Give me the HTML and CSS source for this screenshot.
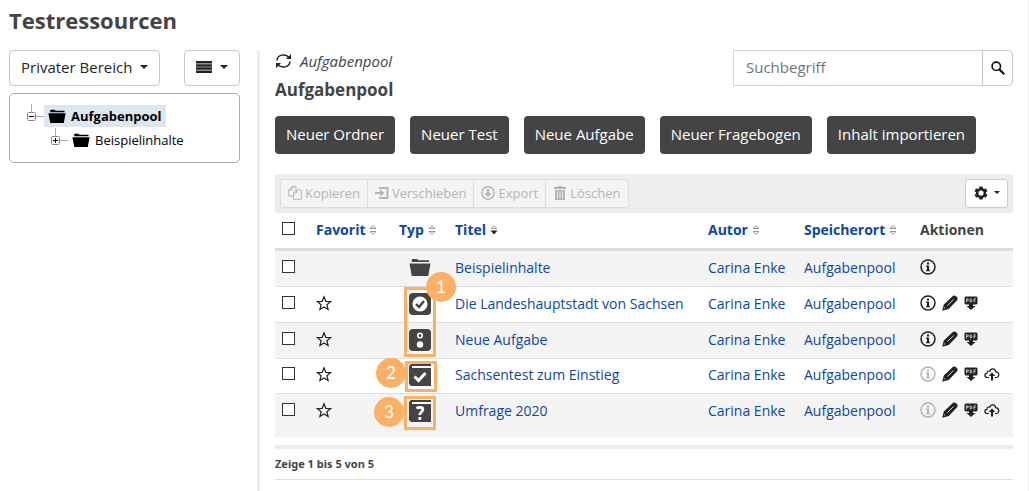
FILE: index.html
```html
<!DOCTYPE html>
<html lang="de">
<head>
<meta charset="utf-8">
<title>Testressourcen</title>
<link rel="stylesheet" href="styles.css">
</head>
<body>
<svg class="sprite" aria-hidden="true">
  <symbol id="folder" viewBox="0 0 24 20" preserveAspectRatio="none"><path d="M3 4V1h6l1 1.500h12v2H3zM.5 6h23L21 20H3z"/></symbol>
  <symbol id="sort" viewBox="0 0 8 10"><path d="M1 3.500 4 .8l3 2.700zM1 6.500l3 2.700 3-2.700z" fill="#fff" stroke="#888" stroke-width=".9"/></symbol>
  <symbol id="sort-down" viewBox="0 0 8 10"><path d="M1 3.500 4 .8l3 2.700z" fill="#fff" stroke="#999" stroke-width=".9"/><path d="M.5 5.500h7L4 9.500z" fill="#222"/></symbol>
  <symbol id="star" viewBox="0 0 16 16"><path d="m8 1.800 1.800 4.500 4.800.3-3.700 3.100 1.200 4.800L8 11.900l-4.100 2.600 1.200-4.800-3.700-3.100 4.800-.3z" fill="none" stroke="currentColor" stroke-width="1.200"/></symbol>
  <symbol id="info" viewBox="0 0 16 16"><circle cx="8" cy="8" r="7" fill="none" stroke="currentColor" stroke-width="1.500"/><path d="M7 3.500h2v2H7zM6 6.500h3V11h1v1.200H6V11h1V7.700H6z"/></symbol>
  <symbol id="pencil" viewBox="0 0 16 16"><path d="M10.300 1.500c1.700-2.500 6.700.8 5 3.500L6.800 14 .2 15.800 1.800 9.500z"/><path d="m5.500 10.500 6-6" stroke="#fff" stroke-width=".8"/><path d="m2.800 13.700-1-.4.500-1.500z" fill="#fff"/></symbol>
  <symbol id="pdf" viewBox="0 0 14 14"><path d="M1.500.500h11l1 1v6l-1 1H9v1.500h2.500L7 14l-4.500-4H5V8.500H1.500l-1-1v-6z"/><path d="M2.500 6.500V2.800h1.700v1.700H3M6.200 2.800v3.200h.8l.8-1v-1.300l-.8-.9zM10 6.500V2.800h2M10 4.600h1.500" fill="none" stroke="#ddd" stroke-width=".8"/></symbol>
  <symbol id="cloud" viewBox="0 0 16 14"><path d="M5 10.500H3.500C0 10.500.1 6.500 3 6.300c-.2-2 1.400-2.700 2.700-2C6.500.8 11.500 1 11.600 4.700c4 .2 4.200 5.500.9 5.800H11" fill="none" stroke="currentColor" stroke-width="1.200"/><path d="m8 5.500 3.300 3.500H9v4.500H7V9H4.700z"/></symbol>
  <symbol id="copy" viewBox="0 0 14 14"><path d="M5 10H.7V4L4 .7h4V4M4 .7V4H.7M5.500 13.300V6.500L8.500 4h4.800v9.300zM8.500 4v3h-3" fill="none" stroke="currentColor"/></symbol>
  <symbol id="move" viewBox="0 0 14 14"><path d="M4 1h9.500v12H4v-2h7.500V3H4z"/><path d="M0 6h5V3.500L9.500 7 5 10.500V8H0z"/></symbol>
  <symbol id="export" viewBox="0 0 14 14"><circle cx="7" cy="7" r="6.200" fill="none" stroke="currentColor" stroke-width="1.400"/><path d="M6 3h2v4h2.500L7 11 3.500 7H6z"/></symbol>
  <symbol id="trash" viewBox="0 0 12 14"><path d="M4 0h4v1h4v2H0V1h4zM1 4h10v10H1z"/><path d="M3.500 5.500v7M6 5.500v7m2.500-7v7" stroke="#f4f4f4" stroke-width=".8"/></symbol>
</svg>
<div class="page">
  <h1>Testressourcen</h1>
  <div class="layout">
    <aside class="side">
      <div class="side-tools">
        <button class="btn" type="button">Privater Bereich <i class="caret"></i></button>
        <button class="btn" type="button" aria-label="Ansicht"><svg class="bars" viewBox="0 0 16 12"><path fill="#8a8e91" d="M0 0h16v12H0z"/><path d="M0 1h16M0 4.500h16M0 7.500h16M0 11h16" stroke="#212529" stroke-width="2"/></svg><i class="caret"></i></button>
      </div>
      <nav class="tree" aria-label="Ordner">
        <div class="node"><svg class="joint" viewBox="0 0 17 24"><path d="M4.500 0v10M9 12.500h8" stroke="#aaa"/><rect x=".5" y="8.500" width="8" height="8" rx="1" fill="#fff" stroke="#888"/><path d="M2 12.500h5" stroke="#000"/></svg><a class="leaf active" href="#"><svg class="folder"><use href="#folder"/></svg>Aufgabenpool</a></div>
        <div class="node child"><svg class="joint" viewBox="0 0 17 24"><path d="M4.500 0v9M9 12.500h8" stroke="#aaa"/><rect x=".5" y="8.500" width="8" height="8" rx="1" fill="#fff" stroke="#888"/><path d="M2 12.500h5M4.500 10v5" stroke="#000"/></svg><a class="leaf" href="#"><svg class="folder"><use href="#folder"/></svg>Beispielinhalte</a></div>
      </nav>
    </aside>
    <main class="main">
      <header class="head">
        <div>
          <div class="crumb"><svg class="refresh" viewBox="0 0 16 16"><path d="M1.500 7.500C2 1.500 10 .2 13.500 4.500M14.500 8.500C14 14.500 6 15.800 2.500 11.500" fill="none" stroke="#222" stroke-width="1.500"/><path d="M15.500 1v5h-5zM.5 15v-5h5z"/></svg><em>Aufgabenpool</em></div>
          <h2>Aufgabenpool</h2>
        </div>
        <form class="search">
          <input type="text" placeholder="Suchbegriff" aria-label="Suchbegriff">
          <button type="button" aria-label="Suchen"><svg viewBox="0 0 14 14"><circle cx="5.300" cy="5.300" r="4.200" fill="none" stroke="#111" stroke-width="1.600"/><path d="m8.200 8.200 5 5" stroke="#111" stroke-width="2.200"/></svg></button>
        </form>
      </header>
      <div class="actions">
        <button type="button">Neuer Ordner</button>
        <button type="button">Neuer Test</button>
        <button type="button">Neue Aufgabe</button>
        <button type="button">Neuer Fragebogen</button>
        <button type="button">Inhalt importieren</button>
      </div>
      <div class="toolbar">
        <div class="group">
          <button type="button" disabled><svg><use href="#copy"/></svg>Kopieren</button>
          <button type="button" disabled><svg><use href="#move"/></svg>Verschieben</button>
          <button type="button" disabled><svg><use href="#export"/></svg>Export</button>
          <button type="button" disabled><svg><use href="#trash"/></svg>Löschen</button>
        </div>
        <button class="settings" type="button" aria-label="Einstellungen"><svg viewBox="0 0 14 14"><path d="M7 .5v13M1.300 3.800l11.400 6.400M1.300 10.200l11.400-6.400" stroke="#222" stroke-width="3.400"/><circle cx="7" cy="7" r="3.900" fill="#fff" stroke="#222" stroke-width="2.600"/></svg><i class="caret small"></i></button>
      </div>
      <div class="table-wrap">
        <table>
          <colgroup><col class="c-check"><col class="c-fav"><col class="c-type"><col><col class="c-author"><col class="c-place"><col class="c-act"></colgroup>
          <thead>
            <tr>
              <th><input type="checkbox" aria-label="Alle auswählen"></th>
              <th><a href="#">Favorit<svg class="sort"><use href="#sort"/></svg></a></th>
              <th><a href="#">Typ<svg class="sort"><use href="#sort"/></svg></a></th>
              <th><a href="#">Titel<svg class="sort"><use href="#sort-down"/></svg></a></th>
              <th><a href="#">Autor<svg class="sort"><use href="#sort"/></svg></a></th>
              <th><a href="#">Speicherort<svg class="sort"><use href="#sort"/></svg></a></th>
              <th>Aktionen</th>
            </tr>
          </thead>
          <tbody>
            <tr>
              <td><input type="checkbox" aria-label="Beispielinhalte auswählen"></td><td></td>
              <td><svg class="type type-folder"><use href="#folder"/></svg></td>
              <td><a href="#">Beispielinhalte</a></td><td><a href="#">Carina Enke</a></td><td><a href="#">Aufgabenpool</a></td>
              <td><div class="icons"><svg><use href="#info"/></svg></div></td>
            </tr>
            <tr>
              <td><input type="checkbox" aria-label="Die Landeshauptstadt von Sachsen auswählen"></td><td><svg class="star"><use href="#star"/></svg></td>
              <td><svg class="type" viewBox="0 0 22 22"><rect width="22" height="22" rx="4"/><circle cx="11" cy="11" r="7.500" fill="#fff"/><path d="m7 11 3 3 5-6" fill="none" stroke="#444" stroke-width="2.400"/></svg></td>
              <td><a href="#">Die Landeshauptstadt von Sachsen</a></td><td><a href="#">Carina Enke</a></td><td><a href="#">Aufgabenpool</a></td>
              <td><div class="icons"><svg><use href="#info"/></svg><svg><use href="#pencil"/></svg><svg class="pdf"><use href="#pdf"/></svg></div></td>
            </tr>
            <tr>
              <td><input type="checkbox" aria-label="Neue Aufgabe auswählen"></td><td><svg class="star"><use href="#star"/></svg></td>
              <td><svg class="type" viewBox="0 0 22 22"><rect width="22" height="22" rx="4"/><circle cx="11" cy="6.500" r="2.300" fill="none" stroke="#fff" stroke-width="1.500"/><circle cx="11" cy="15.500" r="3.200" fill="#fff"/></svg></td>
              <td><a href="#">Neue Aufgabe</a></td><td><a href="#">Carina Enke</a></td><td><a href="#">Aufgabenpool</a></td>
              <td><div class="icons"><svg><use href="#info"/></svg><svg><use href="#pencil"/></svg><svg class="pdf"><use href="#pdf"/></svg></div></td>
            </tr>
            <tr class="short">
              <td><input type="checkbox" aria-label="Sachsentest zum Einstieg auswählen"></td><td><svg class="star"><use href="#star"/></svg></td>
              <td><svg class="type" viewBox="0 0 22 22"><path d="M2 0h20v22H2L0 20V2z"/><path d="M3 3h19" stroke="#fff" stroke-width="2"/><path d="m5.500 12.500 4 4L16.500 9" fill="none" stroke="#fff" stroke-width="3"/></svg></td>
              <td><a href="#">Sachsentest zum Einstieg</a></td><td><a href="#">Carina Enke</a></td><td><a href="#">Aufgabenpool</a></td>
              <td><div class="icons"><svg class="off"><use href="#info"/></svg><svg><use href="#pencil"/></svg><svg class="pdf"><use href="#pdf"/></svg><svg><use href="#cloud"/></svg></div></td>
            </tr>
            <tr class="last">
              <td><input type="checkbox" aria-label="Umfrage 2020 auswählen"></td><td><svg class="star"><use href="#star"/></svg></td>
              <td><svg class="type" viewBox="0 0 22 22"><path d="M2 0h20v22H2L0 20V2z"/><path d="M3 3h19" stroke="#fff" stroke-width="2"/><path d="M7.500 8.500c2-1.500 6.500-1.500 6.300 1 0 2.500-3 2.500-3 5.500M10.800 17v3" fill="none" stroke="#fff" stroke-width="2.800"/></svg></td>
              <td><a href="#">Umfrage 2020</a></td><td><a href="#">Carina Enke</a></td><td><a href="#">Aufgabenpool</a></td>
              <td><div class="icons"><svg class="off"><use href="#info"/></svg><svg><use href="#pencil"/></svg><svg class="pdf"><use href="#pdf"/></svg><svg><use href="#cloud"/></svg></div></td>
            </tr>
          </tbody>
        </table>
        <span class="frame frame-1"></span><span class="frame frame-2"></span><span class="frame frame-3"></span>
        <span class="mark mark-1">1</span><span class="mark mark-2">2</span><span class="mark mark-3">3</span>
      </div>
      <footer class="foot">Zeige 1 bis 5 von 5</footer>
    </main>
  </div>
</div>
</body>
</html>
```
FILE: styles.css
```css
* { box-sizing: border-box; }
body { margin: 0; background: #fff; color: #444; font: 15px/20px "Open Sans", "Noto Sans", sans-serif; }
button, input { font: inherit; margin: 0; }
a { color: #0d47a1; text-decoration: none; }
svg { flex: none; fill: currentColor; }
.sprite { position: absolute; width: 0; height: 0; }
.page { padding: 5px 15px 0 9px; border-right: 1px solid #f0f0f0; min-height: 100vh; }
h1 { margin: 0; font-size: 22px; line-height: 30px; }
h2 { margin: 0; font-size: 17px; line-height: 24px; }
.layout { display: flex; margin-top: 15px; }
.side { width: 231px; flex: none; }
.side-tools { display: flex; justify-content: space-between; margin-bottom: 7px; }
.btn { display: flex; align-items: center; gap: 8px; height: 36px; padding: 0 11px 2px; color: #212529; background: #fff; border: 1px solid #c8c8c8; border-radius: 4px; }
.caret { border: 4px solid transparent; border-top-color: #212529; border-bottom: 0; }
.caret.small { border-width: 3px; border-bottom: 0; }
.bars { width: 16px; height: 12px; }
.tree { border: 1px solid #aaa; border-radius: 5px; padding: 10px 17px; color: #000; font-size: 13px; }
.node { display: flex; align-items: center; height: 24px; }
.child { margin-left: 24px; }
.joint { width: 17px; height: 24px; }
.leaf { display: flex; align-items: center; gap: 5px; height: 22px; padding: 0 4px; color: #000; }
.folder { width: 18px; height: 14px; }
.active { background: #dee7f0; font-weight: bold; border-radius: 1px; }
.main { flex: 1; min-width: 0; margin-left: 17px; padding-left: 15px; border-left: 3px solid #ededed; min-height: 441px; }
.head { display: flex; justify-content: space-between; height: 66px; }
.crumb { display: flex; align-items: center; gap: 8px; height: 22px; font-size: 15px; margin-bottom: 6px; }
.refresh { width: 17px; height: 16px; color: #222; }
.search { display: flex; width: 280px; height: 36px; }
.search input { flex: 1; min-width: 0; border: 1px solid #ced4da; padding: 0 12px 2px; color: #444; }
.search input::placeholder { color: #6c757d; opacity: 1; }
.search button { width: 31px; margin-left: -1px; padding: 0; border: 1px solid #c8c8c8; border-radius: 0 4px 4px 0; background: #fff; display: grid; place-items: center; }
.search svg { width: 14px; height: 14px; }
.actions { display: flex; gap: 15px; margin-bottom: 20px; }
.actions button { height: 38px; padding: 0 11px 2px; border: 0; border-radius: 4px; background: #444; color: #fff; white-space: nowrap; }
.toolbar { display: flex; align-items: center; justify-content: space-between; height: 39px; padding: 0 5px; background: #ededed; }
.group { display: flex; }
.group button { display: flex; align-items: center; gap: 3px; height: 29px; padding: 0 7px 1px; margin-left: -1px; border: 1px solid #ddd; background: #f4f4f4; color: #b5b5b5; font-size: 13px; }
.group button:first-child { margin-left: 0; border-radius: 3px 0 0 3px; }
.group button:last-child { border-radius: 0 3px 3px 0; }
.group svg { width: 14px; height: 14px; }
.settings { display: flex; align-items: center; justify-content: center; gap: 6px; width: 43px; height: 29px; padding: 0 0 2px; background: #fff; border: 1px solid #ccc; border-radius: 3px; }
.settings svg { width: 14px; height: 14px; }
.table-wrap { position: relative; }
table { width: 100%; table-layout: fixed; border-collapse: separate; border-spacing: 0; font-size: 14px; line-height: 20px; }
.c-check { width: 34px; }
.c-fav { width: 83px; }
.c-type { width: 56px; }
.c-author { width: 96px; }
.c-place { width: 116px; }
.c-act { width: 100px; }
th, td { height: 36px; padding: 0 0 2px 7px; text-align: left; vertical-align: middle; white-space: nowrap; border-top: 1px solid #ddd; }
thead tr th { height: 38px; border-top: 0; border-bottom: 3px solid #ddd; }
tbody tr:first-child td { height: 35px; border-top: 0; }
tbody tr:nth-child(odd) { background: #f4f4f4; }
.short td { height: 35px; }
.last td { height: 44px; padding-bottom: 10px; }
input[type="checkbox"] { appearance: none; display: block; width: 13px; height: 13px; border: 1px solid #333; background: #fff; margin-bottom: 3px; }
.sort { width: 8px; height: 10px; margin-left: 4px; }
.star { display: block; width: 16px; height: 16px; margin-bottom: 2px; color: #222; }
.type { display: block; width: 22px; height: 22px; margin-left: 10px; }
.type-folder { height: 18px; margin-bottom: 2px; }
.icons { display: flex; align-items: center; gap: 6px; color: #222; margin-bottom: 2px; }
.icons svg { width: 16px; height: 16px; }
.icons .pdf { width: 14px; height: 14px; }
.icons .off { color: #b5b5b5; }
.frame { position: absolute; border: 3px solid #fbb067; width: 32px; left: 129px; }
.frame-1 { top: 74px; height: 70px; }
.frame-2 { top: 148px; height: 31px; left: 130px; }
.frame-3 { top: 183px; height: 34px; }
.mark { position: absolute; width: 30px; height: 30px; border-radius: 50%; background: #fbb067; color: #fff; text-align: center; font: 17px/30px Lato, sans-serif; }
.mark-1 { left: 151px; top: 59px; }
.mark-2 { left: 101px; top: 145px; }
.mark-3 { left: 99px; top: 184px; }
.foot { margin-top: 8px; border-top: 4px solid #ededed; border-bottom: 1px solid #ddd; font-family: "Noto Sans", sans-serif; font-size: 11px; font-weight: bold; line-height: 30px; }
```
